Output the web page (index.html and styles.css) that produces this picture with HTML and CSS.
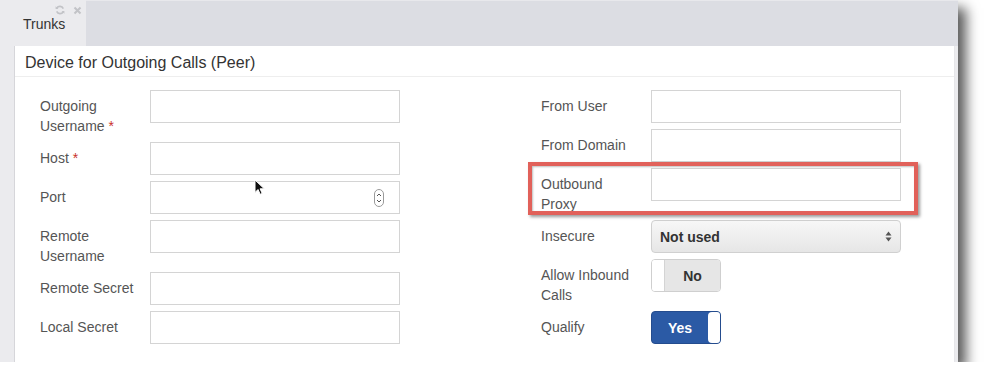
FILE: index.html
```html
<!DOCTYPE html>
<html lang="en">
<head>
  <meta charset="UTF-8" />
  <title>Trunks</title>
  <link rel="stylesheet" href="styles.css">
</head>
<body>
  <div class="window">
    <div class="tabbar">
      <div class="tab">
        <span class="tab-icons">
          <svg width="10" height="10" viewBox="0 0 10 10"><path d="M8.3 3.6A3.6 3.6 0 0 0 1.8 3.2M1.7 6.4a3.6 3.6 0 0 0 6.5 0.4" fill="none" stroke="#c2c3c7" stroke-width="1.6"/><path d="M0.6 1.2v2.9h2.9zM9.4 8.8V5.9H6.5z" fill="#c2c3c7"/></svg>
          <svg width="9" height="9" viewBox="0 0 9 9"><path d="M1.5 1.5l6 6M7.5 1.5l-6 6" stroke="#c2c3c7" stroke-width="2"/></svg>
        </span>
        Trunks
      </div>
      <div class="tab-fill"></div>
    </div>

    <div class="content">
      <div class="panel">
        <div class="panel-title">Device for Outgoing Calls (Peer)</div>
        <div class="form">
          <div class="column">
            <div class="row">
              <label>Outgoing Username <span class="req">*</span></label>
              <div class="field"></div>
            </div>
            <div class="row">
              <label>Host <span class="req">*</span></label>
              <div class="field"></div>
            </div>
            <div class="row">
              <label>Port</label>
              <div class="field spin-field">
                <svg class="spin" width="10" height="18" viewBox="0 0 10 18"><rect x="0.5" y="0.5" width="9" height="17" rx="4.5" fill="#fff" stroke="#9a9a9a"/><path d="M3 7l2-2 2 2M3 11l2 2 2-2" fill="none" stroke="#555" stroke-width="1"/></svg>
              </div>
            </div>
            <div class="row">
              <label>Remote Username</label>
              <div class="field"></div>
            </div>
            <div class="row">
              <label>Remote Secret</label>
              <div class="field"></div>
            </div>
            <div class="row">
              <label>Local Secret</label>
              <div class="field"></div>
            </div>
          </div>

          <div class="column">
            <div class="row">
              <label>From User</label>
              <div class="field"></div>
            </div>
            <div class="row">
              <label>From Domain</label>
              <div class="field"></div>
            </div>
            <div class="row">
              <label>Outbound Proxy</label>
              <div class="field"></div>
            </div>
            <div class="row">
              <label>Insecure</label>
              <div class="select">
                Not used
                <svg width="7" height="11" viewBox="0 0 7 11"><path d="M0.5 4.5L3.5 0.5 6.5 4.5zM0.5 6.5L3.5 10.5 6.5 6.5z" fill="#555"/></svg>
              </div>
            </div>
            <div class="row">
              <label>Allow Inbound Calls</label>
              <div class="toggle off"><span class="knob"></span><span class="toggle-text">No</span></div>
            </div>
            <div class="row">
              <label>Qualify</label>
              <div class="toggle on"><span class="toggle-text">Yes</span><span class="knob"></span></div>
            </div>
          </div>
        </div>
      </div>
    </div>

    <div class="highlight"></div>
    <svg class="cursor" width="11" height="17" viewBox="0 0 11 17"><path d="M1 1v12.5l3-3 2.2 4.8 2-0.9-2.1-4.6h4.2z" fill="#111" stroke="#fff" stroke-width="1"/></svg>
  </div>
</body>
</html>
```

FILE: styles.css
```css
body {
  margin: 0;
  background: #fff;
  font-family: "Liberation Sans", Arial, sans-serif;
}
.window {
  position: relative;
  width: 958px;
  height: 362px;
  background: #ebebee;
  display: flex;
  flex-direction: column;
  box-shadow: 8px 8px 12px rgba(0,0,0,0.65);
}
.tabbar {
  display: flex;
  height: 46px;
  flex-shrink: 0;
}
.tab {
  position: relative;
  width: 86px;
  padding: 16px 0 0 23px;
  box-sizing: border-box;
  font-size: 14px;
  color: #333;
}
.tab-icons {
  position: absolute;
  top: 5px;
  left: 55px;
  display: flex;
  align-items: center;
  gap: 8px;
}
.tab-fill {
  flex: 1;
  background: #dcdde3;
  border-top: 1px solid #e8e8ec;
}
.content {
  flex: 1;
  display: flex;
  padding: 0 3px 0 14px;
}
.panel {
  flex: 1;
  background: #fff;
  border-left: 1px solid #d6d6da;
  border-right: 1px solid #e6e6e9;
}
.panel-title {
  padding: 8px 10px 4px;
  line-height: 18px;
  font-size: 16px;
  color: #333;
  border-bottom: 1px solid #eeeeee;
}
.form {
  display: grid;
  grid-template-columns: 360px 360px;
  column-gap: 141px;
  padding: 13px 0 0 25px;
}
.row {
  display: flex;
  gap: 10px;
  margin-bottom: 6px;
}
.row label {
  width: 100px;
  padding-top: 6px;
  font-size: 14px;
  line-height: 20px;
  color: #555;
}
.req {
  color: #c9302c;
}
.field {
  width: 250px;
  height: 33px;
  box-sizing: border-box;
  border: 1px solid #d4d4d4;
  background: #fff;
}
.spin-field {
  display: flex;
  align-items: center;
  justify-content: flex-end;
  padding-right: 15px;
}
.select {
  width: 250px;
  height: 33px;
  box-sizing: border-box;
  border: 1px solid #d0d0d0;
  border-radius: 4px;
  background: linear-gradient(#f7f7f7, #e6e6e6);
  display: flex;
  align-items: center;
  justify-content: space-between;
  padding: 0 8px 0 8px;
  font-size: 14px;
  font-weight: bold;
  color: #333;
}
.toggle {
  width: 70px;
  height: 33px;
  box-sizing: border-box;
  border: 1px solid #cfcfcf;
  border-radius: 4px;
  display: flex;
  overflow: hidden;
  font-size: 14px;
  font-weight: bold;
}
.toggle .knob {
  width: 12px;
  background: #fff;
}
.toggle-text {
  flex: 1;
  display: flex;
  align-items: center;
  justify-content: center;
}
.toggle.off .toggle-text {
  background: #e6e6e6;
  color: #333;
  border-left: 1px solid #d4d4d4;
}
.toggle.on {
  background: #2b5aa5;
  border-color: #244c8e;
}
.toggle.on .toggle-text {
  color: #fff;
}
.toggle.on .knob {
  border-radius: 4px 0 0 4px;
}
.highlight {
  position: absolute;
  left: 528px;
  top: 162px;
  width: 390px;
  height: 53px;
  box-sizing: border-box;
  border: 4px solid #e1615a;
  box-shadow: 2px 2px 3px rgba(0,0,0,0.4), inset 1px 1px 2px rgba(0,0,0,0.25);
}
.cursor {
  position: absolute;
  left: 254px;
  top: 179px;
}
```
